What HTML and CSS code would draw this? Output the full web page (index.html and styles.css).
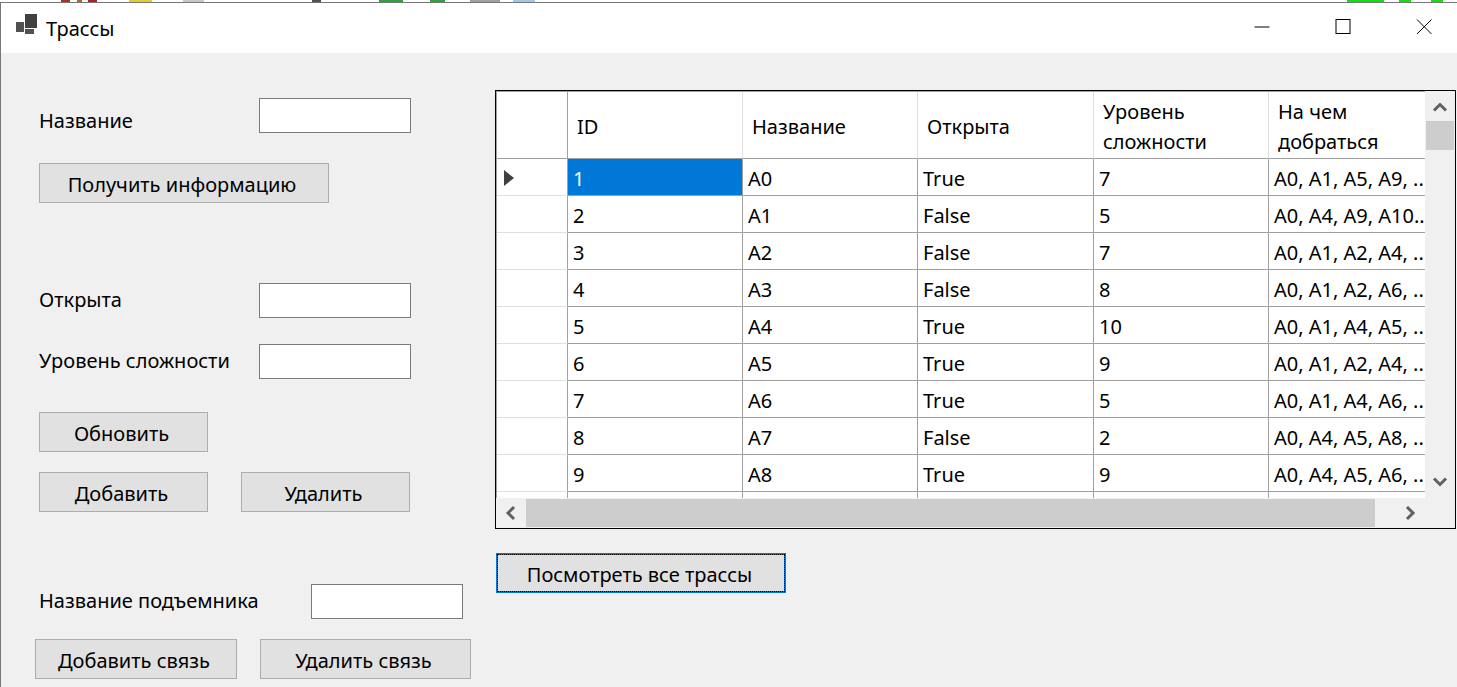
FILE: index.html
```html
<!DOCTYPE html>
<html lang="ru">

<head>
    <meta charset="UTF-8">
    <title>Трассы</title>
    <link rel="stylesheet" href="styles.css">
</head>

<body>
    <div class="desktop-strip"></div>
    <div class="window">
        <header class="titlebar">
            <svg class="app-icon" width="22" height="22" viewBox="0 0 22 22">
                <rect x="9" y="0" width="12" height="14" fill="#404040" />
                <rect x="0" y="8" width="8" height="10" fill="#505050" />
                <rect x="9" y="15" width="9" height="5" fill="#505050" />
            </svg>
            <span class="title">Трассы</span>
            <div class="controls">
                <svg class="control" width="81" height="16" viewBox="0 0 16 16">
                    <path d="M0 8H15" stroke="#000" fill="none" />
                </svg>
                <svg class="control" width="81" height="16" viewBox="0 0 16 16">
                    <rect x="0.5" y="0.5" width="14" height="14" stroke="#000" fill="none" />
                </svg>
                <svg class="control" width="81" height="16" viewBox="0 0 16 16">
                    <path d="M0.5 0.5L15 15M15 0.5L0.5 15" stroke="#000" fill="none" />
                </svg>
            </div>
        </header>

        <main class="client">
            <section class="form">
                <div class="field">
                    <label class="field-label field-label-low">Название</label>
                    <input class="text-input" type="text">
                </div>
                <button class="btn btn-info">Получить информацию</button>

                <div class="field field-open">
                    <label class="field-label">Открыта</label>
                    <input class="text-input" type="text">
                </div>
                <div class="field field-level">
                    <label class="field-label">Уровень сложности</label>
                    <input class="text-input" type="text">
                </div>
                <button class="btn btn-update">Обновить</button>
                <div class="btn-row">
                    <button class="btn btn-small">Добавить</button>
                    <button class="btn btn-small">Удалить</button>
                </div>

                <div class="field field-lift">
                    <label class="field-label field-label-wide">Название подъемника</label>
                    <input class="text-input" type="text">
                </div>
                <div class="link-row">
                    <button class="btn btn-link-add">Добавить связь</button>
                    <button class="btn btn-link-del">Удалить связь</button>
                </div>
            </section>

            <section class="data">
                <div class="grid">
                    <div class="grid-view">
                        <table class="routes">
                            <thead>
                                <tr>
                                    <th class="row-head"></th>
                                    <th>ID</th>
                                    <th>Название</th>
                                    <th class="wide">Открыта</th>
                                    <th>Уровень сложности</th>
                                    <th>На чем добраться</th>
                                </tr>
                            </thead>
                            <tbody>
                                <tr>
                                    <td class="row-head"><span class="row-arrow"></span></td>
                                    <td class="selected">1</td>
                                    <td>A0</td>
                                    <td>True</td>
                                    <td>7</td>
                                    <td>A0, A1, A5, A9, ...</td>
                                </tr>
                                <tr>
                                    <td class="row-head"></td>
                                    <td>2</td>
                                    <td>A1</td>
                                    <td>False</td>
                                    <td>5</td>
                                    <td>A0, A4, A9, A10...</td>
                                </tr>
                                <tr>
                                    <td class="row-head"></td>
                                    <td>3</td>
                                    <td>A2</td>
                                    <td>False</td>
                                    <td>7</td>
                                    <td>A0, A1, A2, A4, ...</td>
                                </tr>
                                <tr>
                                    <td class="row-head"></td>
                                    <td>4</td>
                                    <td>A3</td>
                                    <td>False</td>
                                    <td>8</td>
                                    <td>A0, A1, A2, A6, ...</td>
                                </tr>
                                <tr>
                                    <td class="row-head"></td>
                                    <td>5</td>
                                    <td>A4</td>
                                    <td>True</td>
                                    <td>10</td>
                                    <td>A0, A1, A4, A5, ...</td>
                                </tr>
                                <tr>
                                    <td class="row-head"></td>
                                    <td>6</td>
                                    <td>A5</td>
                                    <td>True</td>
                                    <td>9</td>
                                    <td>A0, A1, A2, A4, ...</td>
                                </tr>
                                <tr>
                                    <td class="row-head"></td>
                                    <td>7</td>
                                    <td>A6</td>
                                    <td>True</td>
                                    <td>5</td>
                                    <td>A0, A1, A4, A6, ...</td>
                                </tr>
                                <tr>
                                    <td class="row-head"></td>
                                    <td>8</td>
                                    <td>A7</td>
                                    <td>False</td>
                                    <td>2</td>
                                    <td>A0, A4, A5, A8, ...</td>
                                </tr>
                                <tr>
                                    <td class="row-head"></td>
                                    <td>9</td>
                                    <td>A8</td>
                                    <td>True</td>
                                    <td>9</td>
                                    <td>A0, A4, A5, A6, ...</td>
                                </tr>
                                <tr>
                                    <td class="row-head"></td>
                                    <td></td>
                                    <td></td>
                                    <td></td>
                                    <td></td>
                                    <td></td>
                                </tr>
                            </tbody>
                        </table>
                    </div>

                    <div class="vscroll">
                        <svg class="arrow" width="30" height="30" viewBox="0 0 30 30">
                            <path d="M9 19.5L15 13.5L21 19.5" stroke="#606060" stroke-width="3" fill="none" />
                        </svg>
                        <div class="vthumb"></div>
                        <svg class="arrow arrow-end" width="30" height="30" viewBox="0 0 30 30">
                            <path d="M9 10.5L15 16.5L21 10.5" stroke="#606060" stroke-width="3" fill="none" />
                        </svg>
                    </div>
                    <div class="hscroll">
                        <svg class="arrow" width="30" height="30" viewBox="0 0 30 30">
                            <path d="M18 9L12 15L18 21" stroke="#606060" stroke-width="3" fill="none" />
                        </svg>
                        <div class="hthumb"></div>
                        <svg class="arrow arrow-end" width="30" height="30" viewBox="0 0 30 30">
                            <path d="M12 9L18 15L12 21" stroke="#606060" stroke-width="3" fill="none" />
                        </svg>
                    </div>
                    <div class="corner"></div>
                </div>
                <button class="btn btn-all">Посмотреть все трассы</button>
            </section>
        </main>
    </div>
</body>

</html>
```

FILE: styles.css
```css
* {
    box-sizing: border-box;
}

html,
body {
    margin: 0;
    height: 100%;
    overflow: hidden;
}

body {
    display: flex;
    flex-direction: column;
    font-family: 'Noto Sans', 'Open Sans', sans-serif;
    font-size: 20px;
    color: #000;
    background: #f0f0f0;
}

/* bits of the desktop showing above the window */
.desktop-strip {
    height: 2px;
    flex: none;
    background: linear-gradient(90deg,
            #fff 61px, #b03020 61px, #b03020 70px, #fff 70px,
            #fff 77px, #c06030 77px, #c06030 82px, #fff 82px,
            #fff 88px, #b02020 88px, #b02020 97px, #fff 97px,
            #fff 129px, #e8c830 129px, #e8c830 152px, #fff 152px,
            #fff 183px, #c8c8c8 183px, #c8c8c8 204px, #fff 204px,
            #fff 312px, #505050 312px, #505050 321px, #fff 321px,
            #fff 379px, #30a040 379px, #30a040 403px, #fff 403px,
            #fff 430px, #30a040 430px, #30a040 445px, #fff 445px,
            #fff 470px, #a0a0a0 470px, #a0a0a0 500px, #fff 500px,
            #fff 513px, #a0c8e8 513px, #a0c8e8 535px, #fff 535px,
            #fff 1347px, #10e010 1347px, #10e010 1384px, #fff 1384px,
            #fff 1399px, #10e010 1399px, #10e010 1411px, #fff 1411px,
            #fff 1431px, #10e010 1431px, #10e010 1443px, #fff 1443px);
}

.window {
    flex: 1;
    display: flex;
    flex-direction: column;
    min-height: 0;
    border-top: 1px solid #777;
    border-left: 1px solid #777;
}

.titlebar {
    height: 50px;
    flex: none;
    display: flex;
    align-items: center;
    background: #fff;
    padding-left: 15px;
}

.app-icon {
    margin-top: -6px;
}

.title {
    margin-left: 8px;
}

.controls {
    display: flex;
    margin-left: auto;
    margin-right: -8px;
    margin-top: -2px;
}

.control {
    display: block;
}

.client {
    flex: 1;
    display: flex;
    min-height: 0;
}

/* left side */
.form {
    width: 494px;
    flex: none;
    padding: 45px 0 0 34px;
}

.field {
    display: flex;
    align-items: center;
    height: 35px;
    margin-left: 4px;
}

.field-label {
    width: 220px;
    flex: none;
    padding-bottom: 2px;
}

.field-label-low {
    padding: 9px 0 0;
}

.field-label-wide {
    width: 272px;
}

.text-input {
    width: 152px;
    height: 35px;
    border: 1px solid #7a7a7a;
    background: #fff;
    padding: 0;
    border-radius: 0;
}

.field-open {
    margin-top: 80px;
}

.field-level {
    margin-top: 26px;
}

.field-lift {
    margin-top: 72px;
}

.btn {
    display: block;
    height: 40px;
    padding: 3px 4px 0 0;
    font: inherit;
    color: #000;
    background: #e1e1e1;
    border: 1px solid #adadad;
    border-radius: 0;
}

.btn-info {
    width: 290px;
    margin: 30px 0 0 4px;
}

.btn-update {
    width: 169px;
    margin: 33px 0 0 4px;
}

.btn-row {
    display: flex;
    gap: 33px;
    margin: 20px 0 0 4px;
}

.btn-small {
    width: 169px;
}

.link-row {
    display: flex;
    gap: 23px;
    margin-top: 20px;
}

.btn-link-add {
    width: 202px;
}

.btn-link-del {
    width: 211px;
}

/* right side */
.data {
    flex: 1;
    padding-top: 37px;
    min-width: 0;
}

.grid {
    width: 961px;
    height: 439px;
    display: grid;
    grid-template-columns: 929px 30px;
    grid-template-rows: 407px 30px;
    border: 1px solid #000;
    background: #f0f0f0;
}

.grid-view {
    overflow: hidden;
    background: #fff;
    border-top: 1px solid #a0a0a0;
    border-left: 1px solid #a0a0a0;
}

.routes {
    width: 947px;
    table-layout: fixed;
    border-collapse: separate;
    border-spacing: 0;
}

.routes th,
.routes td {
    width: 175px;
    padding: 3px 0 0 5px;
    font-weight: 400;
    text-align: left;
    white-space: nowrap;
    overflow: hidden;
    border-right: 1px solid #a0a0a0;
    border-bottom: 1px solid #a0a0a0;
}

.routes th {
    height: 67px;
    padding: 4px 8px 0 9px;
    line-height: 30px;
    white-space: normal;
    border-right-color: #e0e0e0;
}

.routes td {
    height: 37px;
}

.routes .wide {
    width: 176px;
}

.routes .row-head {
    width: 71px;
    padding: 0 0 0 7px;
    border-right-color: #a0a0a0;
    border-bottom-color: #e0e0e0;
}

.routes th.row-head {
    border-bottom-color: #a0a0a0;
}

.routes .selected {
    color: #fff;
    background: #0078d7;
}

.row-arrow {
    display: block;
    width: 0;
    height: 0;
    border-left: 10px solid #404040;
    border-top: 8px solid transparent;
    border-bottom: 8px solid transparent;
    margin-top: 1px;
}

.vscroll {
    display: flex;
    flex-direction: column;
}

.hscroll {
    display: flex;
}

.arrow {
    display: block;
    flex: none;
}

.arrow-end {
    margin-top: auto;
}

.hscroll .arrow-end {
    margin-top: 0;
    margin-left: auto;
}

.vthumb {
    height: 29px;
    margin: 0 1px;
    background: #cdcdcd;
}

.hthumb {
    width: 849px;
    margin: 1px 0;
    background: #cdcdcd;
}

.btn-all {
    width: 290px;
    margin: 24px 0 0 1px;
    padding-right: 3px;
    border: 2px solid #0078d7;
    outline: 1px dotted #000;
    outline-offset: -2px;
}
```
